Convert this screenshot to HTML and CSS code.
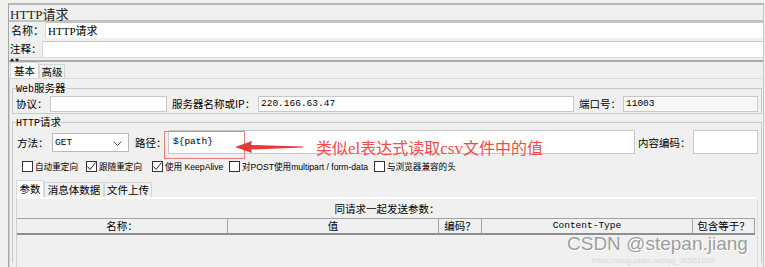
FILE: index.html
```html
<!DOCTYPE html>
<html lang="zh">
<head>
<meta charset="utf-8">
<title>HTTP请求</title>
<link rel="stylesheet" href="styles.css">
</head>
<body>
<div class="frame">
  <div class="title"><span class="serif">HTTP</span>请求</div>
  <div class="row name-row">
    <span class="lbl lbl-name">名称：</span>
    <div class="field"><span class="serif">HTTP</span>请求</div>
  </div>
  <div class="row comment-row">
    <span class="lbl lbl-comment">注释：</span>
    <div class="field"></div>
  </div>
  <div class="splitter"><span class="arrows">▲▼</span></div>
  <div class="tabs">
    <span class="tab active">基本</span><span class="tab">高级</span>
  </div>
  <div class="tabpanel">
    <fieldset class="group web">
      <legend><span class="mono">Web</span>服务器</legend>
      <div class="row server-row">
        <span class="lbl w-proto">协议：</span>
        <div class="box w-proto-in"></div>
        <span class="lbl w-host">服务器名称或IP：</span>
        <div class="box grow mono">220.166.63.47</div>
        <span class="lbl w-port">端口号：</span>
        <div class="box w-port-in mono">11003</div>
      </div>
    </fieldset>
    <fieldset class="group http">
      <legend><span class="mono">HTTP</span>请求</legend>
      <div class="row method-row">
        <span class="lbl w-method">方法：</span>
        <div class="select mono">GET
          <svg class="chev" width="9" height="6" viewBox="0 0 9 6"><polyline points="0.5,0.5 4.5,4.5 8.5,0.5" fill="none" stroke="#555" stroke-width="1"/></svg>
        </div>
        <span class="lbl w-path">路径：</span>
        <div class="box tall grow mono">${path}</div>
        <span class="lbl w-enc">内容编码：</span>
        <div class="box tall w-enc-in"></div>
      </div>
      <div class="row checks">
        <label class="chk c1"><span class="cb"></span>自动重定向</label>
        <label class="chk c2"><span class="cb"><svg width="11" height="11" viewBox="0 0 11 11"><polyline points="1.5,5.5 4,8.5 9.5,1.5" fill="none" stroke="#222" stroke-width="1"/></svg></span>跟随重定向</label>
        <label class="chk c3"><span class="cb"><svg width="11" height="11" viewBox="0 0 11 11"><polyline points="1.5,5.5 4,8.5 9.5,1.5" fill="none" stroke="#222" stroke-width="1"/></svg></span>使用 KeepAlive</label>
        <label class="chk c4"><span class="cb"></span>对POST使用multipart / form-data</label>
        <label class="chk c5"><span class="cb"></span>与浏览器兼容的头</label>
      </div>
      <div class="subtabs">
        <span class="stab active">参数</span><span class="stab">消息体数据</span><span class="stab">文件上传</span>
      </div>
      <div class="subpanel">
        <div class="caption">同请求一起发送参数：</div>
        <div class="thead">
          <span class="th c-name">名称：</span>
          <span class="th c-val">值</span>
          <span class="th c-enc">编码？</span>
          <span class="th c-ct mono">Content-Type</span>
          <span class="th c-inc">包含等于？</span>
        </div>
        <div class="tbody"></div>
      </div>
    </fieldset>
  </div>
</div>

<div class="note-box"></div>
<svg class="note-arrow" width="72" height="18" viewBox="0 0 72 18">
  <polygon points="2,9 19,3 18,7 70,8.6 70,9.6 18,11.5 19,15" fill="#e8383a"/>
</svg>
<div class="note-text">类似<span class="serif">el</span>表达式读取<span class="serif">csv</span>文件中的值</div>

<div class="watermark">CSDN @stepan.jiang</div>
<div class="watermark-url">https://blog.csdn.net/qq_36561038</div>
</body>
</html>
```
FILE: styles.css
```css
* { box-sizing: border-box; }
html, body { margin: 0; padding: 0; }
body {
  width: 765px;
  height: 267px;
  overflow: hidden;
  position: relative;
  background: #f0f0f0;
  color: #000;
  font-family: "Noto Sans CJK SC", "Noto Sans", sans-serif;
  font-size: 10.5px;
}
.serif { font-family: "Liberation Serif", "Noto Sans CJK SC", serif; }
.mono { font-family: "Liberation Mono", "Noto Sans CJK SC", monospace; font-size: 9.5px; }

.frame {
  margin: 3px 1px 0 8px;
  height: 264px;
  border-top: 2px solid #b8b8b8;
  border-left: 1px solid #a6a6a6;
  border-right: 1px solid #c4c4c4;
  display: flex;
  flex-direction: column;
}
.title {
  height: 17px;
  line-height: 17px;
  padding-left: 1px;
  font-size: 13px;
  color: #222;
  border-bottom: 2px solid #c2c2c2;
  flex: none;
}
.row { display: flex; align-items: center; flex: none; }
.lbl { flex: none; white-space: nowrap; }
.name-row { height: 16px; }
.lbl-name { width: 36px; padding-left: 2px; font-size: 11px; }
.comment-row { height: 16px; margin-top: 3px; }
.lbl-comment { width: 33px; padding-left: 1px; font-size: 10.5px; line-height: 14px; }
.field {
  flex: 1;
  height: 16px;
  background: #fff;
  border-top: 1px solid #c6c6c6;
  border-left: 1px solid #dadada;
  font-size: 11px;
  line-height: 14px;
  padding-left: 2px;
}
.field .serif { font-size: 11px; }

.splitter {
  flex: none;
  height: 5px;
  border-top: 1px solid #dcdcdc;
  border-bottom: 2px solid #a9a9a9;
  position: relative;
}
.arrows {
  position: absolute;
  left: 1px;
  top: 0;
  font-size: 4px;
  line-height: 4px;
  letter-spacing: 1px;
  color: #111;
}

.tabs { flex: none; height: 16px; display: flex; align-items: flex-end; padding-left: 1px; }
.tab {
  height: 14px;
  line-height: 13px;
  padding: 0;
  border: 1px solid #d6d6d6;
  border-bottom: none;
  font-size: 10.5px;
  white-space: nowrap;
  text-align: center;
}
.tab.active {
  height: 16px;
  line-height: 15px;
  width: 29px;
  background: #fcfcfc;
}
.tab:not(.active) { width: 26px; }

.tabpanel {
  flex: 1;
  border-top: 1px solid #dadada;
  border-left: 1px solid #cfcfcf;
  padding-top: 2px;
  min-height: 0;
}
.group {
  margin: 0 1px 0 2px;
  padding: 0 3px 1px 3px;
  border: 1px solid #c9c9c9;
  min-width: 0;
}
.group legend {
  padding: 0;
  line-height: 14px;
  height: 14px;
  font-size: 10.5px;
  white-space: nowrap;
}
.group legend .mono { font-size: 10px; }
.server-row { height: 17px; }
.box {
  height: 16px;
  background: #fff;
  border: 1px solid #c8c8c8;
  line-height: 14px;
  padding-left: 2px;
  white-space: nowrap;
  flex: none;
}
.box.grow { flex: 1; }
.box.tall { height: 24px; line-height: 22px; padding-left: 4px; }
.w-proto { width: 34px; }
.w-proto-in { width: 117px; }
.w-host { width: 86px; margin-left: 5px; }
.w-port { width: 44px; margin-left: 5px; }
.w-port-in { width: 135px; background: #f7f7f7; }

.http { margin-top: 1px; height: 148px; border-bottom: none; }
.method-row { height: 24px; margin-top: 1px; }
.w-method { width: 36px; padding-left: 1px; }
.select {
  flex: none;
  width: 77px;
  height: 19px;
  background: #fff;
  border: 1px solid #b9b9b9;
  line-height: 17px;
  padding-left: 2px;
  position: relative;
}
.chev { position: absolute; right: 6px; top: 7px; }
.w-path { width: 33px; margin-left: 6px; }
.w-enc { width: 55px; margin-left: 3px; }
.w-enc-in { width: 65px; }

.checks {
  height: 16px;
  margin-top: 4px;
  padding-left: 6px;
  font-family: "Liberation Sans", "Noto Sans CJK SC", sans-serif;
  font-size: 8.6px;
}
.chk { display: flex; align-items: center; flex: none; white-space: nowrap; }
.cb {
  width: 11px;
  height: 11px;
  background: #fff;
  border: 1px solid #333;
  margin-right: 2px;
  flex: none;
  display: flex;
}
.cb svg { display: block; margin: -1px; }
.c1 { width: 64px; }
.c2 { width: 66px; }
.c3 { width: 77px; }
.c4 { width: 145px; }

.subtabs { height: 17px; margin-top: 6px; display: flex; align-items: flex-end; }
.stab {
  height: 15px;
  line-height: 14px;
  border: 1px solid #d6d6d6;
  border-bottom: none;
  text-align: center;
  font-size: 10.5px;
  white-space: nowrap;
}
.stab:nth-child(1) { width: 28px; height: 17px; line-height: 16px; background: #fcfcfc; }
.stab:nth-child(2) { width: 60px; }
.stab:nth-child(3) { width: 48px; }
.subpanel {
  border-top: 2px solid #ffffff;
  border-left: 1px solid #cdcdcd;
  border-right: 1px solid #dcdcdc;
  height: 80px;
}
.caption { height: 19px; line-height: 19px; text-align: center; }
.thead {
  display: flex;
  height: 17px;
  border-top: 1px solid #a2a2a2;
  border-bottom: 2px solid #8e8e8e;
  width: 738px;
}
.th {
  flex: none;
  border-right: 1px solid #a2a2a2;
  text-align: center;
  line-height: 14px;
  height: 14px;
}
.th.mono { line-height: 14px; }
.c-name { width: 211px; }
.c-val { width: 211px; }
.c-enc { width: 43px; }
.c-ct { width: 211px; }
.c-inc { width: 62px; }

.note-box {
  position: absolute;
  left: 164px;
  top: 131px;
  width: 81px;
  height: 28px;
  border: 1px solid #ec7c7c;
}
.note-arrow { position: absolute; left: 233px; top: 138px; }
.note-text {
  position: absolute;
  left: 316px;
  top: 136px;
  font-size: 16px;
  line-height: 22px;
  color: #f04c4c;
  white-space: nowrap;
}
.note-text .serif { font-size: 17px; }

.watermark {
  position: absolute;
  left: 567px;
  top: 233px;
  font-family: "Liberation Sans", "Noto Sans", sans-serif;
  font-size: 19px;
  line-height: 22px;
  color: #9c9c9c;
  text-shadow: 0 0 1px #fff, 1px 1px 0 #ffffff;
  white-space: nowrap;
}
.watermark-url {
  position: absolute;
  left: 592px;
  top: 256px;
  font-family: "Liberation Sans", sans-serif;
  font-size: 8px;
  line-height: 10px;
  color: rgba(205,205,205,0.75);
  white-space: nowrap;
}
```
